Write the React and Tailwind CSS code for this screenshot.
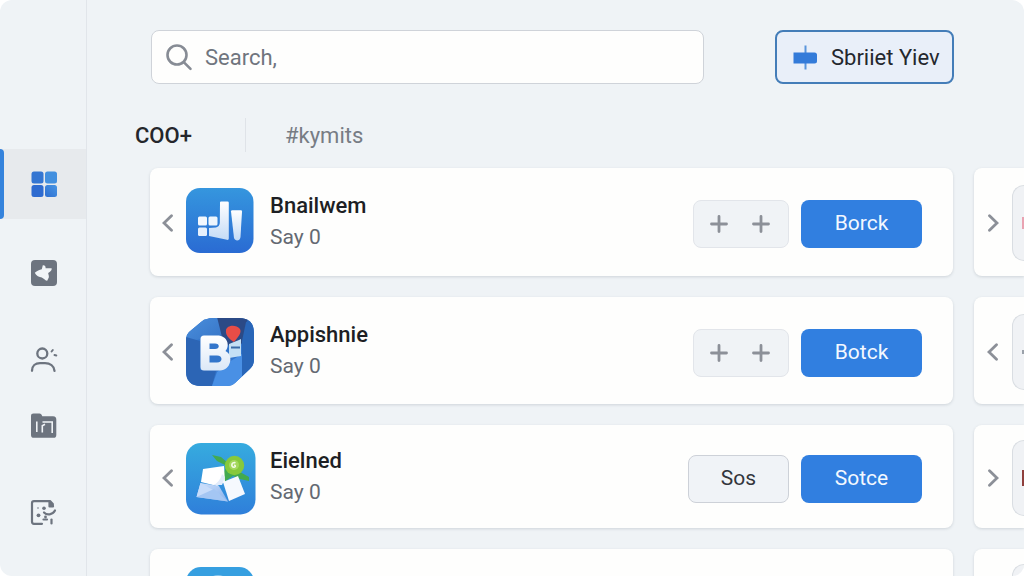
import React from "react";

function TilesIcon() {
  return (
    <svg width="28" height="28" viewBox="0 0 28 28" aria-hidden="true">
      <defs>
        <linearGradient id="tile" x1="0" y1="1" x2="1" y2="0">
          <stop offset="0" stopColor="#2f6fd0" />
          <stop offset="1" stopColor="#4795e4" />
        </linearGradient>
      </defs>
      <rect x="1.500" y="1.500" width="12" height="12" rx="2.500" fill="#3476d2" />
      <rect x="15" y="1.500" width="12" height="12" rx="2.500" fill="#4390df" />
      <rect x="1.500" y="15" width="12" height="12" rx="2.500" fill="#2e6bd0" />
      <rect x="15" y="15" width="12" height="12" rx="2.500" fill="url(#tile)" />
    </svg>
  );
}

function BadgeIcon() {
  return (
    <svg width="28" height="28" viewBox="0 0 28 28" aria-hidden="true">
      <rect x="1" y="1" width="26" height="26" rx="4" fill="#6d747f" />
      <path
        d="M4.800 13.800C7 11.800 9.500 11 11.800 10.200L12.800 6.200C14.700 6 15.800 7 15.600 9.300L21.600 9.300C22.200 10.600 21 12.500 18.200 13.900C18.200 15 19.200 16.800 18.800 18.400L17.200 21.800C15.500 21.800 14 19.400 11.800 18.400C9.500 18.400 6 16.800 4.800 13.800Z"
        fill="#f2f5f8"
      />
    </svg>
  );
}

function PersonIcon() {
  return (
    <svg width="28" height="28" viewBox="0 0 28 28" fill="none" stroke="#6d747f" strokeWidth="2.300" strokeLinecap="round" aria-hidden="true">
      <circle cx="12.300" cy="7.500" r="5" />
      <path d="M2 24.800C2 20 5.500 17.200 10 17.200H15C20 17.200 24 20 24.500 24.800" />
      <path d="M21.600 5.500L22.800 4" strokeWidth="2" />
      <path d="M24.500 9L26.300 9.500" strokeWidth="2" />
    </svg>
  );
}

function FolderIcon() {
  return (
    <svg width="28" height="28" viewBox="0 0 28 28" aria-hidden="true">
      <path d="M1 4C1 2.300 1.800 1.500 3.500 1.500H9.500C11 1.500 11.500 2.300 12.300 4.200H23C25.500 4.200 26.300 5.500 26.300 7.700V23C26.300 25 25.300 25.800 23.500 25.800H4C2 25.800 1 25 1 23Z" fill="#6d747f" />
      <path d="M6.800 9.500V20" stroke="#f0f3f7" strokeWidth="1.600" />
      <path d="M12.300 20.500V13.800L15 12.300M12.500 10H22.200V21" fill="none" stroke="#f0f3f7" strokeWidth="1.600" />
    </svg>
  );
}

function NoteIcon() {
  return (
    <svg width="28" height="28" viewBox="0 0 28 28" fill="none" stroke="#6d747f" strokeWidth="2.200" strokeLinecap="round" strokeLinejoin="round" aria-hidden="true">
      <path d="M12 24.800H4C2.500 24.800 2 24 2 22.800V4.200C2 2.800 2.700 2.100 4 2.100H20L22.800 5V7" />
      <path d="M19.500 3L19.500 7.500L23 7.500Z" fill="#6d747f" />
      <path d="M14 13.500C17 16.500 22.500 16 25 11.500" />
      <path d="M13.500 20.500H17" />
      <path d="M21.500 20.500V24.500" />
      <g fill="#6d747f" stroke="none">
        <circle cx="14" cy="9.300" r="1.800" />
        <circle cx="8.500" cy="16.300" r="1.900" />
        <circle cx="15.500" cy="18" r="1.400" />
        <circle cx="8" cy="9" r=".8" />
      </g>
    </svg>
  );
}

function Chevron({ dir }) {
  return (
    <svg width="12" height="18" viewBox="0 0 12 18" fill="none" stroke="#8c9098" strokeWidth="2.800" strokeLinecap="round" aria-hidden="true">
      <path d={dir === "left" ? "M9.500 1.800L2 9L9.500 16.200" : "M2.500 1.800L10 9L2.500 16.200"} />
    </svg>
  );
}

function ChartLogo() {
  return (
    <svg width="70" height="72" viewBox="0 0 70 72" className="shrink-0" aria-hidden="true">
      <defs>
        <linearGradient id="chart-bg" x1="0" y1="0" x2="0" y2="1">
          <stop offset="0" stopColor="#3596de" />
          <stop offset="1" stopColor="#2a6bd3" />
        </linearGradient>
        <linearGradient id="chart-fg" x1="0" y1="0" x2="0" y2="1">
          <stop offset="0" stopColor="#ffffff" />
          <stop offset="1" stopColor="#c3dbf6" />
        </linearGradient>
      </defs>
      <rect x="0" y="0" width="67.500" height="65" rx="14" fill="url(#chart-bg)" />
      <rect x="12" y="28.500" width="9" height="9" rx="1.500" fill="#f3f8fe" />
      <rect x="22.500" y="28.500" width="9" height="9" rx="1.500" fill="#edf5fd" />
      <rect x="12" y="39.500" width="9" height="8.500" rx="1.500" fill="#e6f0fc" />
      <path d="M34 14.500Q34 13.500 35 13.500H41.500Q42.800 13.500 42.800 14.800V50.500Q42.800 52.200 41 51.800L23 48V40L30 39.500Q33.500 38.500 33.800 35Z" fill="url(#chart-fg)" />
      <path d="M45 23.500Q45 22.300 46.200 22.300H55Q56 22.300 56 23.500L54.500 49C54 53.500 49 53.500 48 50Z" fill="url(#chart-fg)" />
    </svg>
  );
}

function LetterLogo() {
  return (
    <svg width="70" height="72" viewBox="0 0 70 72" className="shrink-0" aria-hidden="true">
      <defs>
        <linearGradient id="letter-bg" x1="0" y1="0" x2="1" y2="1">
          <stop offset="0" stopColor="#4a8fdd" />
          <stop offset="1" stopColor="#3572c4" />
        </linearGradient>
        <linearGradient id="letter-fg" x1="0" y1="0" x2="0" y2="1">
          <stop offset="0" stopColor="#ffffff" />
          <stop offset="1" stopColor="#dce8f7" />
        </linearGradient>
        <clipPath id="letter-clip">
          <path d="M21 2Q23 1 27 1H53Q68 1 68 16V43Q68 48 64 52L49 66Q46 69 41 69H15Q0 69 0 54V22Q0 18 3 15L15 5Q18 2 21 2Z" />
        </clipPath>
      </defs>
      <g clipPath="url(#letter-clip)">
        <rect width="70" height="72" fill="#3275cb" />
        <path d="M0 0H32L38 28L14 22L0 26Z" fill="url(#letter-bg)" />
        <path d="M31 0H62L59 22L50 34L37 24Z" fill="#2b4a86" />
        <path d="M60 5L70 0V46L56 60V24Z" fill="#2966b8" />
        <path d="M0 20L14 24V53L30 54L25 72H0Z" fill="#2c65b5" />
        <path d="M25 72L31 55L43 45L56 37V60L44 72Z" fill="#4990e5" />
      </g>
      <path d="M43 27L53 23L55 22V39L43 41Z" fill="#c4e0f5" />
      <path d="M45 30.500H54" stroke="#3b6ba6" strokeWidth="2" />
      <path d="M40 13C41 8 50 7 54 12C56 16 52 20 48 25C45 23 39 19 40 13Z" fill="#e84d47" />
      <path fillRule="evenodd" d="M14.500 22Q14.500 18.500 18 18.500H31C42 18.500 44 29 39.500 34C48 38 45 53.500 34 53.500H18Q14.500 53.500 14.500 50ZM23.500 26.500V32H29C34 32 34 26.500 29 26.500ZM23.500 38.500V45.500H31C37 45.500 37 38.500 31 38.500Z" fill="url(#letter-fg)" />
    </svg>
  );
}

function MailLogo() {
  return (
    <svg width="70" height="72" viewBox="0 0 70 72" className="shrink-0" aria-hidden="true">
      <defs>
        <linearGradient id="mail-bg" x1="0" y1="0" x2="0" y2="1">
          <stop offset="0" stopColor="#36abdf" />
          <stop offset="1" stopColor="#2f7fda" />
        </linearGradient>
        <linearGradient id="mail-fg" x1="0" y1="0" x2="1" y2="1">
          <stop offset="0" stopColor="#d0e1fb" />
          <stop offset="1" stopColor="#86b1ec" />
        </linearGradient>
      </defs>
      <rect x="0" y="0" width="69.500" height="71.500" rx="15" fill="url(#mail-bg)" />
      <path d="M26 12L35 14L42 20L54 29L63 34V38L54 36L47 33L38 39L36 32L41 23L31 18Z" fill="#43aa50" />
      <path d="M17 26L38 23L39 39L31 43L15 39Z" fill="#ffffff" />
      <path d="M14.500 40L33 43L42 58.500L10.500 54Z" fill="url(#mail-fg)" />
      <path d="M14.500 40L29 48L10.500 54Z" fill="#c7dcfa" />
      <path d="M10.500 54L28 46L42 58.500Z" fill="#a4c6f3" />
      <path d="M37 39L52 33L59 51L43 58Z" fill="#f6f9fe" />
      <path d="M25 42C30 43 35 36 36 31L39 34L36 42Z" fill="#e2ecfb" />
      <circle cx="48.500" cy="22.500" r="9.700" fill="#86c93c" />
      <circle cx="48" cy="22" r="5" fill="#a5d85e" />
      <path d="M49.500 19.800C45.500 18.500 44.500 24 48 24.200C50 24 49.500 22 48 22.300" fill="none" stroke="#f3fbe7" strokeWidth="1.600" />
    </svg>
  );
}

function OrbLogo() {
  return (
    <svg width="70" height="72" viewBox="0 0 70 72" className="shrink-0" aria-hidden="true">
      <rect x="0" y="0" width="68" height="70" rx="15" fill="#369fe0" />
      <circle cx="32" cy="20" r="12" fill="#8bc7ee" />
    </svg>
  );
}

const nav = [
  [{ label: "Dashboard", Icon: TilesIcon, active: true }],
  [{ label: "Featured", Icon: BadgeIcon }],
  [
    { label: "People", Icon: PersonIcon },
    { label: "Library", Icon: FolderIcon },
  ],
  [{ label: "Notes", Icon: NoteIcon }],
];

const rows = [
  { name: "Bnailwem", Logo: ChartLogo, action: "Borck", next: "right", height: "min-h-[108px]", peek: "h-3 bg-[#e9a3b2]" },
  { name: "Appishnie", Logo: LetterLogo, action: "Botck", next: "left", height: "min-h-[107px]", peek: "h-1 bg-[#9aa1aa]" },
  { name: "Eielned", Logo: MailLogo, action: "Sotce", alt: "Sos", next: "right", height: "min-h-[103px]", peek: "h-4 bg-[#8f3f3c]" },
  { name: "", Logo: OrbLogo, next: "right", height: "min-h-[103px]", peek: "h-3 bg-[#9aa1aa]" },
];

function Plus() {
  return (
    <svg width="18" height="18" viewBox="0 0 18 18" stroke="#8c9098" strokeWidth="2.800" strokeLinecap="round" aria-hidden="true">
      <path d="M9 1.500V16.500M1.500 9H16.500" />
    </svg>
  );
}

function Sidebar() {
  return (
    <nav aria-label="Main" className="flex w-[87px] shrink-0 flex-col gap-[21px] border-r border-[#e1e5ea] pt-[149px]">
      {nav.map((group, i) => (
        <div key={i} className="flex flex-col">
          {group.map(({ label, Icon, active }) => (
            <a
              key={label}
              href="#"
              aria-label={label}
              className={active ? "flex h-[70px] items-center bg-[#e7eaed]" : "flex h-[66px] items-center pl-1"}
            >
              {active && <span className="h-full w-1 rounded-r bg-[#3583dc]" />}
              <span className="flex flex-1 justify-center pr-[2px]">
                <Icon />
              </span>
            </a>
          ))}
        </div>
      ))}
    </nav>
  );
}

function AppRow({ name, Logo, action, alt, height }) {
  return (
    <article className={`flex items-center rounded-lg bg-[#fefefd] pt-1 pr-[31px] pl-3 shadow-[0_1px_3px_rgba(60,70,90,0.18)] ${height}`}>
      <button type="button" aria-label="Previous" className="mr-3 pb-[2px]">
        <Chevron dir="left" />
      </button>
      <Logo />
      <div className="ml-[14px] min-w-0 flex-1 pb-[6px]">
        <h2 className="text-[22px] leading-8 font-medium text-[#1d1f24]">{name}</h2>
        {name && <p className="text-[21px] leading-[30px] text-[#646972]">Say 0</p>}
      </div>
      {action && (
        <div className="flex gap-3">
          {alt ? (
            <button type="button" className="h-12 w-[101px] rounded-lg border border-[#cdd1d8] bg-[#f0f3f7] text-[21px] text-[#33363c]">
              {alt}
            </button>
          ) : (
            <div className="flex h-12 w-24 items-center justify-center gap-6 rounded-lg border border-[#e2e5ea] bg-[#f0f3f6] pr-[2px]">
              <button type="button" aria-label="Add"><Plus /></button>
              <button type="button" aria-label="Add more"><Plus /></button>
            </div>
          )}
          <button type="button" className="h-12 w-[121px] rounded-lg bg-[#317fe0] text-[21px] text-[#f3f8ff]">
            {action}
          </button>
        </div>
      )}
    </article>
  );
}

function NextPeek({ next, peek }) {
  return (
    <aside className="flex items-center gap-[13px] overflow-hidden rounded-l-lg bg-[#fefefd] pt-[2px] pl-[13px] shadow-[0_1px_3px_rgba(60,70,90,0.18)]">
      <button type="button" aria-label="Next">
        <Chevron dir={next} />
      </button>
      <div className="flex h-[76px] flex-1 items-center justify-end rounded-l-2xl border-y border-l border-[#d9dde2] bg-[#f0f2f5]">
        <span className={`w-[2px] ${peek}`} />
      </div>
    </aside>
  );
}

export default function App() {
  return (
    <div className="h-screen overflow-hidden bg-white font-['Roboto','Liberation_Sans',sans-serif]">
      <div className="flex h-full overflow-hidden rounded-xl bg-[#eff3f6]">
        <Sidebar />
        <main className="min-w-0 flex-1 pt-[30px]">
          <header className="flex gap-[71px] pr-[70px] pl-16">
            <label className="flex h-[54px] min-w-0 flex-1 items-center gap-3 rounded-lg border border-[#cfd3d9] bg-[#fefefd] pl-[13px]">
              <svg width="28" height="28" viewBox="0 0 28 28" fill="none" stroke="#878c95" strokeWidth="2.600" strokeLinecap="round" aria-hidden="true">
                <circle cx="12" cy="12" r="9.500" />
                <path d="M19 19.300L25.500 25.800" />
              </svg>
              <input type="text" aria-label="Search" placeholder="Search," className="h-10 min-w-0 flex-1 bg-transparent text-[22px] text-[#70757e] outline-none placeholder:text-[#70757e]" />
            </label>
            <button type="button" className="flex h-[54px] w-[179px] items-center gap-3 rounded-lg border-2 border-[#447db8] bg-[#e9eff9] pl-4 text-[22px] whitespace-nowrap text-[#24272d]">
              <svg width="26" height="26" viewBox="0 0 26 26" aria-hidden="true">
                <path d="M12.500 1.500V25.500" stroke="#5a95dc" strokeWidth="2" />
                <path d="M.5 8.500H21.500Q24 8.500 24 11V17Q24 19.500 21.500 19.500H.5Z" fill="#347bd9" />
              </svg>
              Sbriiet Yiev
            </button>
          </header>
          <div role="tablist" className="mt-[34px] flex h-[34px] items-center pl-12">
            <button type="button" role="tab" aria-selected="true" className="w-[110px] text-left text-[22px] font-medium text-[#24262b]">
              COO+
            </button>
            <span className="h-full w-px bg-[#dfe3e8]" />
            <button type="button" role="tab" aria-selected="false" className="pl-[39px] text-[22px] text-[#777c84]">
              #kymits
            </button>
          </div>
          <section className="mt-4 grid grid-cols-[minmax(0,1fr)_50px] gap-[21px] pl-[63px]">
            {rows.map((row) => (
              <React.Fragment key={row.height + row.name}>
                <AppRow {...row} />
                <NextPeek next={row.next} peek={row.peek} />
              </React.Fragment>
            ))}
          </section>
        </main>
      </div>
    </div>
  );
}
